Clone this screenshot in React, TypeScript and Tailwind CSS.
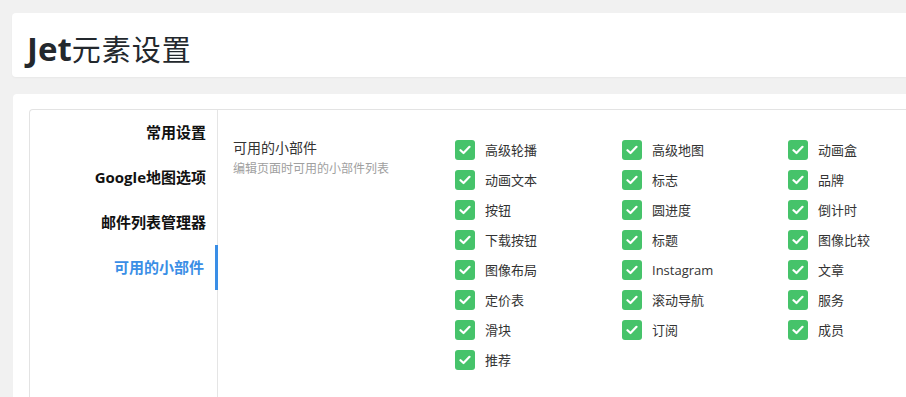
import { ReactNode } from "react";

const font = { fontFamily: '"Open Sans", "Noto Sans CJK SC", sans-serif' };

const tabs = ["常用设置", "Google地图选项", "邮件列表管理器", "可用的小部件"];

const widgets = [
  "高级轮播", "高级地图", "动画盒",
  "动画文本", "标志", "品牌",
  "按钮", "圆进度", "倒计时",
  "下载按钮", "标题", "图像比较",
  "图像布局", "Instagram", "文章",
  "定价表", "滚动导航", "服务",
  "滑块", "订阅", "成员",
  "推荐",
];

function Checkbox({ children }: { children: ReactNode }) {
  return (
    <div className="flex items-center h-[30px]">
      <span className="w-5 h-5 rounded-[3px] bg-[#46c36a] flex items-center justify-center">
        <svg width="12" height="10" viewBox="0 0 12 10" fill="none">
          <path d="M1.5 5.2 L4.5 8 L10.5 1.8" stroke="white" strokeWidth="2.2" strokeLinecap="round" strokeLinejoin="round" />
        </svg>
      </span>
      <span className="ml-[10px] text-[13px] text-[#333] leading-[20px]">{children}</span>
    </div>
  );
}

export default function App() {
  return (
    <div className="w-[906px] h-[397px] overflow-hidden bg-[#f1f1f1]" style={font}>
      <div className="ml-[12px] mt-[13px] h-[64px] bg-white rounded-l-[4px] shadow-[0_1px_2px_rgba(0,0,0,0.04)] flex items-center pl-[15px]">
        <h1 className="text-[#23282d] leading-none pt-[6px]">
          <span className="font-bold text-[33px]">Jet</span>
          <span className="font-normal text-[29px] tracking-[1px]">元素设置</span>
        </h1>
      </div>
      <div className="ml-[13px] mt-[17px] h-[320px] bg-white rounded-l-[4px] pl-[16px] pt-[15px]">
        <div className="flex h-full border border-[#e3e3e3] border-r-0 rounded-tl-[4px]">
          <nav className="w-[188px] shrink-0 border-r border-[#e5e5e5] flex flex-col">
            {tabs.map((t, i) => {
              const active = i === tabs.length - 1;
              return (
                <div
                  key={t}
                  className={
                    active
                      ? "h-[45px] flex items-center justify-end pr-[11px] text-[15px] font-bold text-[#3a8ee6] border-r-[3px] border-[#3a8ee6] -mr-px"
                      : "h-[45px] flex items-center justify-end pr-[11px] text-[15px] font-bold text-[#111]"
                  }
                >
                  {t}
                </div>
              );
            })}
          </nav>
          <div className="flex items-start pl-[15px] pt-[25px]">
            <div className="w-[222px] shrink-0">
              <div className="text-[14px] text-[#333] leading-[20px] mt-[3px]">可用的小部件</div>
              <div className="text-[12px] text-[#a0a0a0] leading-[20px] mt-[1px]">编辑页面时可用的小部件列表</div>
            </div>
            <div className="grid grid-cols-[167px_166px_120px] content-start">
              {widgets.map((w) => (
                <Checkbox key={w}>{w}</Checkbox>
              ))}
            </div>
          </div>
        </div>
      </div>
    </div>
  );
}
